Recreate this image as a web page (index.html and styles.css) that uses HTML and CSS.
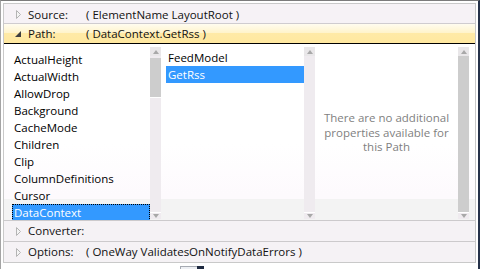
FILE: index.html
```html
<!DOCTYPE html>
<html>
<head>
<meta charset="utf-8">
<link rel="stylesheet" href="styles.css">
</head>
<body>
<div class="window">
  <div class="panel">
    <div class="row row-source">
      <span class="exp"><svg width="5" height="9" viewBox="0 0 5 9"><path d="M0.5 0.5 L4.5 4.5 L0.5 8.5 Z" fill="#f4f4f4" stroke="#b4b4b4"/></svg></span>
      <span class="label">Source:</span>
      <span class="value">( ElementName LayoutRoot )</span>
    </div>
    <div class="row row-path">
      <span class="exp"><svg width="6" height="6" viewBox="0 0 6 6"><path d="M6 0 L6 6 L0 6 Z" fill="#3f3f3f"/></svg></span>
      <span class="label">Path:</span>
      <span class="value">( DataContext.GetRss )</span>
    </div>
    <div class="content">
      <div class="list list-props">
        <div class="item">ActualHeight</div>
        <div class="item">ActualWidth</div>
        <div class="item">AllowDrop</div>
        <div class="item">Background</div>
        <div class="item">CacheMode</div>
        <div class="item">Children</div>
        <div class="item">Clip</div>
        <div class="item">ColumnDefinitions</div>
        <div class="item">Cursor</div>
        <div class="item selected focused">DataContext</div>
      </div>
      <div class="sb">
        <div class="sb-up"><span class="arrow-up"></span></div>
        <div class="sb-thumb sb-thumb-small"></div>
        <div class="sb-track"></div>
        <div class="sb-down"><span class="arrow-down"></span></div>
      </div>
      <div class="list list-members">
        <div class="item">FeedModel</div>
        <div class="item selected">GetRss</div>
      </div>
      <div class="sb">
        <div class="sb-up"><span class="arrow-up"></span></div>
        <div class="sb-track"></div>
        <div class="sb-down"><span class="arrow-down"></span></div>
      </div>
      <div class="info">
        <p>There are no additional<br>properties available for<br>this Path</p>
      </div>
      <div class="sb">
        <div class="sb-up"><span class="arrow-up"></span></div>
        <div class="sb-thumb sb-thumb-full"></div>
        <div class="sb-down"><span class="arrow-down"></span></div>
      </div>
      <div class="content-gap"></div>
    </div>
    <div class="row row-converter">
      <span class="exp"><svg width="5" height="9" viewBox="0 0 5 9"><path d="M0.5 0.5 L4.5 4.5 L0.5 8.5 Z" fill="#f4f4f4" stroke="#b4b4b4"/></svg></span>
      <span class="label">Converter:</span>
    </div>
    <div class="row row-options">
      <span class="exp"><svg width="5" height="9" viewBox="0 0 5 9"><path d="M0.5 0.5 L4.5 4.5 L0.5 8.5 Z" fill="#f4f4f4" stroke="#b4b4b4"/></svg></span>
      <span class="label">Options:</span>
      <span class="value">( OneWay ValidatesOnNotifyDataErrors )</span>
    </div>
  </div>
  <div class="peek-box"></div>
  <div class="peek-dark"></div>
</div>
</body>
</html>
```

FILE: styles.css
```css
* { box-sizing: border-box; }

html, body {
  margin: 0;
  padding: 0;
  background: #ffffff;
}

body {
  font-family: "Open Sans", "Noto Sans", sans-serif;
  font-size: 11.5px;
  color: #111111;
  width: 480px;
  height: 269px;
  overflow: hidden;
}

.window {
  position: relative;
  width: 480px;
  height: 269px;
  border-top: 1px solid #7c7c7c;
  border-left: 1px solid #a4a4a4;
  border-right: 2px solid #26324a;
  padding: 2px 2px 0 2px;
  background: #ffffff;
}

.panel {
  width: 473px;
  height: 260px;
  border: 1px solid #c9c9c9;
  display: flex;
  flex-direction: column;
  background: #ffffff;
}

.row {
  display: flex;
  align-items: flex-start;
  padding-left: 11px;
  white-space: nowrap;
  background: #f6f2f6;
  flex: none;
}

.exp {
  width: 13px;
  display: flex;
  align-items: center;
  justify-content: flex-start;
  flex: none;
}

.label {
  width: 58px;
  flex: none;
}

.row-source {
  height: 20px;
  padding-top: 2px;
  line-height: 17px;
  border-bottom: 1px solid #cfcccf;
}

.row-source .exp { height: 17px; padding-left: 1px; }

.row-path {
  height: 20px;
  line-height: 19px;
  border-bottom: 1px solid #000000;
  background: linear-gradient(to bottom, #fffcf0 0%, #fff4cc 45%, #ffeaa6 50%, #ffe8a0 100%);
}

.row-path .exp { height: 19px; padding-top: 1px; }

.content {
  height: 177px;
  border-bottom: 1px solid #cccacc;
  display: flex;
  flex: none;
  overflow: hidden;
  background: linear-gradient(to bottom, #ffffff 0px, #ffffff 100px, #fdfafd 150px, #fdfafd 155px, #f3f3f3 155px, #f3f3f3 176px);
}

.list {
  flex: none;
  height: 176px;
  overflow: hidden;
  white-space: nowrap;
  color: #000000;
}

.list-props {
  width: 146px;
  padding: 7px 0 0 8px;
}

.list-members {
  width: 143px;
  padding: 5px 0 0 5px;
}

.item {
  height: 17px;
  line-height: 17px;
  padding-left: 1px;
  border: 1px solid transparent;
  border-top: 0;
  border-bottom: 0;
}

.list-members .item { padding-left: 1px; }

.item.selected {
  background: #3399ff;
  color: #ffffff;
}

.item.focused {
  border: 1px dotted #000000;
  line-height: 15px;
}

.sb {
  flex: none;
  width: 11px;
  height: 172px;
  margin-top: 3px;
  display: flex;
  flex-direction: column;
  background: #efebef;
}

.sb-up {
  height: 9px;
  background: #e9e7e9;
  display: flex;
  align-items: center;
  justify-content: center;
  flex: none;
}

.sb-down {
  height: 7px;
  border-top: 1px solid #ffffff;
  display: flex;
  align-items: center;
  justify-content: center;
  flex: none;
}

.arrow-up {
  width: 0;
  height: 0;
  border-left: 3.5px solid transparent;
  border-right: 3.5px solid transparent;
  border-bottom: 4px solid #a8a8a8;
}

.arrow-down {
  width: 0;
  height: 0;
  border-left: 3.5px solid transparent;
  border-right: 3.5px solid transparent;
  border-top: 4px solid #a8a8a8;
}

.sb-thumb {
  background: #cdcdcd;
  flex: none;
}

.sb-thumb-small {
  height: 40px;
  margin-top: 2px;
  border-bottom: 1px solid #ffffff;
}

.sb-thumb-full {
  flex: 1;
}

.sb-track {
  flex: 1;
}

.info {
  flex: none;
  width: 143px;
  height: 176px;
  display: flex;
  align-items: center;
  justify-content: center;
  text-align: center;
  color: #7f7f7f;
}

.info p {
  margin: 0;
  line-height: 14.5px;
  padding-top: 2px;
}

.content-gap {
  flex: none;
  width: 6px;
}

.row-converter {
  height: 21px;
  line-height: 20px;
  border-bottom: 1px solid #cccacc;
  background: #f5f2f5;
}

.row-options {
  height: 20px;
  line-height: 20px;
  background: #f5f2f5;
}

.row-converter .exp,
.row-options .exp {
  height: 20px;
  padding-left: 1px;
  padding-top: 1px;
}

.peek-box {
  position: absolute;
  left: 179px;
  top: 265px;
  width: 18px;
  height: 4px;
  border: 1px solid #a6aab2;
  border-bottom: 0;
  background: #eef0f4;
}

.peek-dark {
  position: absolute;
  left: 196px;
  top: 265px;
  width: 7px;
  height: 4px;
  background: #1e2940;
}
```
